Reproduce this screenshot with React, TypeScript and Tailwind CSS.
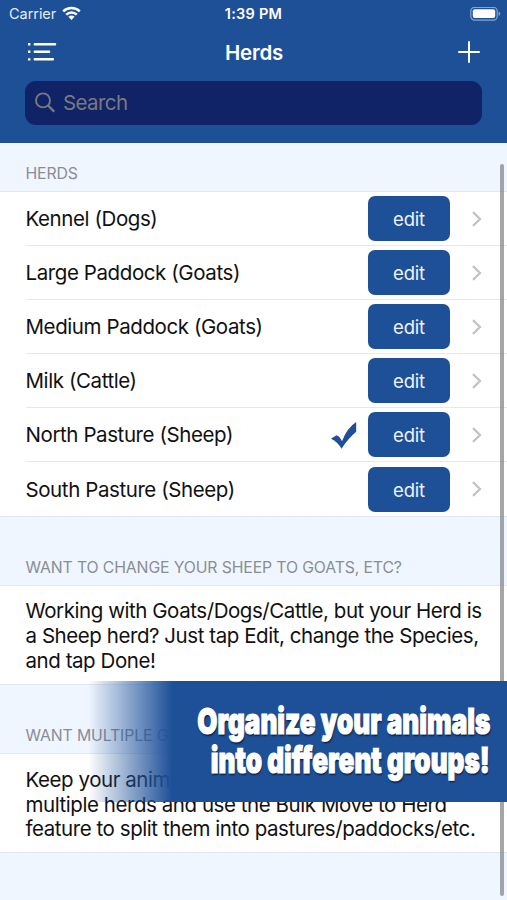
import { clsx } from "clsx";

const herds = [
  { name: "Kennel (Dogs)", selected: false },
  { name: "Large Paddock (Goats)", selected: false },
  { name: "Medium Paddock (Goats)", selected: false },
  { name: "Milk (Cattle)", selected: false },
  { name: "North Pasture (Sheep)", selected: true },
  { name: "South Pasture (Sheep)", selected: false },
];

function StatusBar() {
  return (
    <div className="flex h-7 items-center pl-[9px] pr-[6px] text-[14.5px] text-white">
      <div className="flex flex-1 items-center gap-[6px]">
        <span className="tracking-[-0.05px] text-[#e3ecf8]">Carrier</span>
        <svg className="-mt-[2px]" width="19" height="15" viewBox="0 0 19 15" fill="none" stroke="#fff" strokeWidth="2.5">
          <path d="M1.2 5.3C5.8.8 13.2.8 17.8 5.3" />
          <path d="M4.2 8.7C7.2 5.8 11.8 5.8 14.8 8.7" />
          <path d="M9.5 14 6.4 10.8C8.2 9.2 10.8 9.2 12.6 10.8Z" fill="#fff" stroke="none" />
        </svg>
      </div>
      <span className="-ml-[3px] font-semibold tracking-[0.25px]">1:39 PM</span>
      <div className="flex flex-1 justify-end">
        <svg width="31" height="15" viewBox="0 0 31 15">
          <rect x=".8" y=".3" width="26.4" height="12.8" rx="3.8" fill="none" stroke="#86a4cf" strokeWidth="1.2" />
          <rect x="2.8" y="2.3" width="22.4" height="8.8" rx="2" fill="#fff" />
          <path d="M28.6 4.5C30.8 5.3 30.8 8.1 28.6 8.9Z" fill="#86a4cf" />
        </svg>
      </div>
    </div>
  );
}

function Header() {
  return (
    <header className="h-[143px] bg-[#1e5098]">
      <StatusBar />
      <div className="flex h-[48px] items-center justify-between pl-[27px] pr-[27px]">
        <svg width="30" height="20" viewBox="0 0 30 20" fill="#fff">
          <path d="M1 1h2.4v2.4H1zM1 8.6h2.4V11H1zM1 16.2h2.4v2.4H1z" />
          <rect x="6.6" y="1" width="22.6" height="2.5" rx="1" />
          <rect x="6.6" y="8.6" width="16.6" height="2.5" rx="1" />
          <rect x="6.6" y="16.1" width="20.4" height="2.5" rx="1" />
        </svg>
        <h1 className="-ml-[7px] pt-[2px] text-[20.5px] font-semibold tracking-[-0.2px] text-white">Herds</h1>
        <svg width="22" height="22" viewBox="0 0 22 22" stroke="#fff" strokeWidth="2" strokeLinecap="round">
          <path d="M11 1v20M1 11h20" />
        </svg>
      </div>
      <div className="mx-[25px] mt-[4.5px] flex h-[44px] items-center gap-[8px] rounded-[11px] bg-[#102367] pl-[10px] text-[20.5px] text-[#777a80]">
        <svg width="20" height="21" viewBox="0 0 20 21" fill="none" stroke="currentColor" strokeWidth="1.9">
          <circle cx="8" cy="8.4" r="7" />
          <path d="m13 13.5 6.2 6.2" strokeWidth="2.3" />
        </svg>
        <span className="pt-px tracking-[-0.6px]">Search</span>
      </div>
    </header>
  );
}

function SectionTitle({ className, children }: { className?: string; children: string }) {
  return (
    <div className={clsx("flex items-end whitespace-nowrap border-b border-[#e4e8ee] pb-[7px] pl-[25.5px] text-[15.8px] leading-[20px] tracking-[-0.13px] text-[#898d95]", className)}>
      {children}
    </div>
  );
}

function HerdRow({ name, selected, last }: { name: string; selected: boolean; last: boolean }) {
  return (
    <div className="h-[54.08px] bg-white pl-[25.5px]">
      <div className={clsx("flex h-full items-center pr-[25px]", !last && "border-b border-[#e8e8ea]")}>
        <span className="flex-1 pt-[2px] text-[20.5px] tracking-[-0.41px]">{name}</span>
        {selected && (
          <svg className="mr-[11px]" width="27" height="28" viewBox="0 0 27 28" fill="#1e5098">
            <path d="M1 17.7 6.4 14.2Q9.7 15.4 12 20.2Q17.1 6.8 26.2 1V10.8Q18 17.6 11.5 27.8Q7.7 20.8 1 17.7Z" />
          </svg>
        )}
        <button className="h-[45px] w-[82px] rounded-[7px] bg-[#1e5098] pt-[2px] text-[18.5px] tracking-[-0.2px] text-[#edf4ff]">edit</button>
        <svg className="ml-[22px]" width="10" height="16" viewBox="0 0 10 16" fill="none" stroke="#c3c3c6" strokeWidth="2.3">
          <path d="m1 1.1 7 6.9-7 6.9" />
        </svg>
      </div>
    </div>
  );
}

function Note({ lines }: { lines: string[] }) {
  return (
    <div className="h-[99px] whitespace-nowrap border-b border-[#e4e8ee] bg-white pl-[25.5px] pt-[13.5px] text-[20.5px] leading-[24.6px]">
      {lines.map((line) => (
        <p key={line} className="tracking-[-0.44px]">{line}</p>
      ))}
    </div>
  );
}

export default function App() {
  return (
    <div className="relative h-[900px] w-[507px] overflow-hidden bg-[#f0f6ff] font-['Inter','Liberation_Sans',sans-serif] text-[#111]">
      <Header />
      <SectionTitle className="h-[49px]">HERDS</SectionTitle>
      {herds.map((herd, i) => (
        <HerdRow key={herd.name} {...herd} last={i === herds.length - 1} />
      ))}
      <SectionTitle className="h-[69.5px] border-t">WANT TO CHANGE YOUR SHEEP TO GOATS, ETC?</SectionTitle>
      <Note
        lines={[
          "Working with Goats/Dogs/Cattle, but your Herd is",
          "a Sheep herd? Just tap Edit, change the Species,",
          "and tap Done!",
        ]}
      />
      <SectionTitle className="h-[69.5px]">WANT MULTIPLE G</SectionTitle>
      <Note
        lines={[
          "Keep your anima",
          "multiple herds and use the Bulk Move to Herd",
          "feature to split them into pastures/paddocks/etc.",
        ]}
      />

      {/* Scroll indicator */}
      <div className="absolute right-[3px] top-[164px] h-[732px] w-[4px] rounded-full bg-[#77777b]/65" />

      {/* Caption banner */}
      <div className="absolute right-0 top-[681px] flex h-[121px] w-[419px] flex-col items-end bg-linear-to-r from-[#1e5098]/0 to-[#1e5098] to-[84px] pr-[17px] pt-[21px] text-[36px] font-black leading-[39px] text-white [-webkit-text-stroke:1.2px_white] [text-shadow:1px_2px_2px_#0a1c40]">
        <p className="origin-right scale-x-[0.725] whitespace-nowrap">Organize your animals</p>
        <p className="origin-right scale-x-[0.725] whitespace-nowrap">into different groups!</p>
      </div>
    </div>
  );
}
